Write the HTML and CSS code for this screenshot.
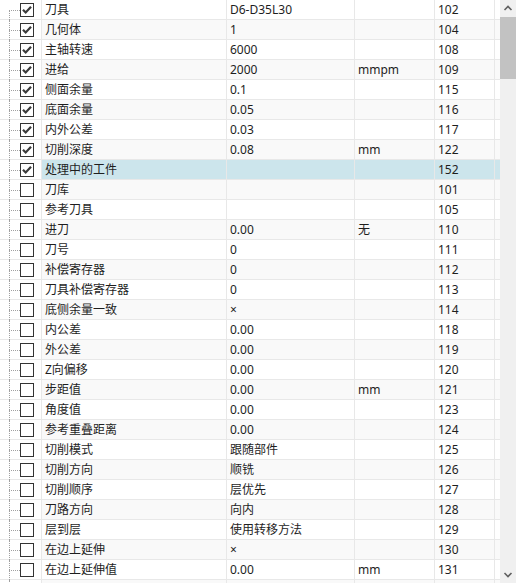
FILE: index.html
```html
<!DOCTYPE html>
<html lang="zh-CN">
<head>
    <meta charset="UTF-8">
    <title>参数列表</title>
    <link rel="stylesheet" href="styles.css">
</head>
<body>

<div class="panel">
    <div class="grid">
        <div class="row first">
            <div class="node"><span class="branch"></span><span class="box"><svg viewBox="0 0 11 11"><polyline points="1.8,5.2 4.3,7.8 9.2,2.6"/></svg></span></div>
            <div class="cell">刀具</div><div class="cell">D6-D35L30</div><div class="cell"></div><div class="cell">102</div><div class="cell"></div>
        </div>
        <div class="row">
            <div class="node"><span class="branch"></span><span class="box"><svg viewBox="0 0 11 11"><polyline points="1.8,5.2 4.3,7.8 9.2,2.6"/></svg></span></div>
            <div class="cell">几何体</div><div class="cell">1</div><div class="cell"></div><div class="cell">104</div><div class="cell"></div>
        </div>
        <div class="row">
            <div class="node"><span class="branch"></span><span class="box"><svg viewBox="0 0 11 11"><polyline points="1.8,5.2 4.3,7.8 9.2,2.6"/></svg></span></div>
            <div class="cell">主轴转速</div><div class="cell">6000</div><div class="cell"></div><div class="cell">108</div><div class="cell"></div>
        </div>
        <div class="row">
            <div class="node"><span class="branch"></span><span class="box"><svg viewBox="0 0 11 11"><polyline points="1.8,5.2 4.3,7.8 9.2,2.6"/></svg></span></div>
            <div class="cell">进给</div><div class="cell">2000</div><div class="cell">mmpm</div><div class="cell">109</div><div class="cell"></div>
        </div>
        <div class="row">
            <div class="node"><span class="branch"></span><span class="box"><svg viewBox="0 0 11 11"><polyline points="1.8,5.2 4.3,7.8 9.2,2.6"/></svg></span></div>
            <div class="cell">侧面余量</div><div class="cell">0.1</div><div class="cell"></div><div class="cell">115</div><div class="cell"></div>
        </div>
        <div class="row">
            <div class="node"><span class="branch"></span><span class="box"><svg viewBox="0 0 11 11"><polyline points="1.8,5.2 4.3,7.8 9.2,2.6"/></svg></span></div>
            <div class="cell">底面余量</div><div class="cell">0.05</div><div class="cell"></div><div class="cell">116</div><div class="cell"></div>
        </div>
        <div class="row">
            <div class="node"><span class="branch"></span><span class="box"><svg viewBox="0 0 11 11"><polyline points="1.8,5.2 4.3,7.8 9.2,2.6"/></svg></span></div>
            <div class="cell">内外公差</div><div class="cell">0.03</div><div class="cell"></div><div class="cell">117</div><div class="cell"></div>
        </div>
        <div class="row">
            <div class="node"><span class="branch"></span><span class="box"><svg viewBox="0 0 11 11"><polyline points="1.8,5.2 4.3,7.8 9.2,2.6"/></svg></span></div>
            <div class="cell">切削深度</div><div class="cell">0.08</div><div class="cell">mm</div><div class="cell">122</div><div class="cell"></div>
        </div>
        <div class="row selected">
            <div class="node"><span class="branch"></span><span class="box"><svg viewBox="0 0 11 11"><polyline points="1.8,5.2 4.3,7.8 9.2,2.6"/></svg></span></div>
            <div class="cell">处理中的工件</div><div class="cell"></div><div class="cell"></div><div class="cell">152</div><div class="cell"></div>
        </div>
        <div class="row">
            <div class="node"><span class="branch"></span><span class="box"></span></div>
            <div class="cell">刀库</div><div class="cell"></div><div class="cell"></div><div class="cell">101</div><div class="cell"></div>
        </div>
        <div class="row">
            <div class="node"><span class="branch"></span><span class="box"></span></div>
            <div class="cell">参考刀具</div><div class="cell"></div><div class="cell"></div><div class="cell">105</div><div class="cell"></div>
        </div>
        <div class="row">
            <div class="node"><span class="branch"></span><span class="box"></span></div>
            <div class="cell">进刀</div><div class="cell">0.00</div><div class="cell">无</div><div class="cell">110</div><div class="cell"></div>
        </div>
        <div class="row">
            <div class="node"><span class="branch"></span><span class="box"></span></div>
            <div class="cell">刀号</div><div class="cell">0</div><div class="cell"></div><div class="cell">111</div><div class="cell"></div>
        </div>
        <div class="row">
            <div class="node"><span class="branch"></span><span class="box"></span></div>
            <div class="cell">补偿寄存器</div><div class="cell">0</div><div class="cell"></div><div class="cell">112</div><div class="cell"></div>
        </div>
        <div class="row">
            <div class="node"><span class="branch"></span><span class="box"></span></div>
            <div class="cell">刀具补偿寄存器</div><div class="cell">0</div><div class="cell"></div><div class="cell">113</div><div class="cell"></div>
        </div>
        <div class="row">
            <div class="node"><span class="branch"></span><span class="box"></span></div>
            <div class="cell">底侧余量一致</div><div class="cell">×</div><div class="cell"></div><div class="cell">114</div><div class="cell"></div>
        </div>
        <div class="row">
            <div class="node"><span class="branch"></span><span class="box"></span></div>
            <div class="cell">内公差</div><div class="cell">0.00</div><div class="cell"></div><div class="cell">118</div><div class="cell"></div>
        </div>
        <div class="row">
            <div class="node"><span class="branch"></span><span class="box"></span></div>
            <div class="cell">外公差</div><div class="cell">0.00</div><div class="cell"></div><div class="cell">119</div><div class="cell"></div>
        </div>
        <div class="row">
            <div class="node"><span class="branch"></span><span class="box"></span></div>
            <div class="cell">Z向偏移</div><div class="cell">0.00</div><div class="cell"></div><div class="cell">120</div><div class="cell"></div>
        </div>
        <div class="row">
            <div class="node"><span class="branch"></span><span class="box"></span></div>
            <div class="cell">步距值</div><div class="cell">0.00</div><div class="cell">mm</div><div class="cell">121</div><div class="cell"></div>
        </div>
        <div class="row">
            <div class="node"><span class="branch"></span><span class="box"></span></div>
            <div class="cell">角度值</div><div class="cell">0.00</div><div class="cell"></div><div class="cell">123</div><div class="cell"></div>
        </div>
        <div class="row">
            <div class="node"><span class="branch"></span><span class="box"></span></div>
            <div class="cell">参考重叠距离</div><div class="cell">0.00</div><div class="cell"></div><div class="cell">124</div><div class="cell"></div>
        </div>
        <div class="row">
            <div class="node"><span class="branch"></span><span class="box"></span></div>
            <div class="cell">切削模式</div><div class="cell">跟随部件</div><div class="cell"></div><div class="cell">125</div><div class="cell"></div>
        </div>
        <div class="row">
            <div class="node"><span class="branch"></span><span class="box"></span></div>
            <div class="cell">切削方向</div><div class="cell">顺铣</div><div class="cell"></div><div class="cell">126</div><div class="cell"></div>
        </div>
        <div class="row">
            <div class="node"><span class="branch"></span><span class="box"></span></div>
            <div class="cell">切削顺序</div><div class="cell">层优先</div><div class="cell"></div><div class="cell">127</div><div class="cell"></div>
        </div>
        <div class="row">
            <div class="node"><span class="branch"></span><span class="box"></span></div>
            <div class="cell">刀路方向</div><div class="cell">向内</div><div class="cell"></div><div class="cell">128</div><div class="cell"></div>
        </div>
        <div class="row">
            <div class="node"><span class="branch"></span><span class="box"></span></div>
            <div class="cell">层到层</div><div class="cell">使用转移方法</div><div class="cell"></div><div class="cell">129</div><div class="cell"></div>
        </div>
        <div class="row">
            <div class="node"><span class="branch"></span><span class="box"></span></div>
            <div class="cell">在边上延伸</div><div class="cell">×</div><div class="cell"></div><div class="cell">130</div><div class="cell"></div>
        </div>
        <div class="row">
            <div class="node"><span class="branch"></span><span class="box"></span></div>
            <div class="cell">在边上延伸值</div><div class="cell">0.00</div><div class="cell">mm</div><div class="cell">131</div><div class="cell"></div>
        </div>
        <div class="row">
            <div class="node"><span class="branch"></span></div>
            <div class="cell"></div><div class="cell"></div><div class="cell"></div><div class="cell"></div><div class="cell"></div>
        </div>
    </div>

    <div class="scrollbar">
        <div class="arrow"><svg viewBox="0 0 16 17"><polyline points="4.5,10 8,6.5 11.5,10"/></svg></div>
        <div class="thumb"></div>
        <div class="track"></div>
        <div class="arrow"><svg viewBox="0 0 16 17"><polyline points="4.5,7 8,10.5 11.5,7"/></svg></div>
    </div>
</div>

</body>
</html>
```

FILE: styles.css
```css
body {
    margin: 0;
    background-color: #ffffff;
    font-family: "Noto Sans", "Noto Sans CJK SC", sans-serif;
    font-size: 12px;
    color: #1e1e1e;
}
.panel {
    display: flex;
    width: 516px;
    height: 583px;
    overflow: hidden;
}
.grid {
    width: 500px;
    flex-shrink: 0;
}
.row {
    display: grid;
    grid-template-columns: 42px 185px 128px 80px 60px 5px;
    height: 20px;
    box-sizing: border-box;
    border-bottom: 1px solid #e8e8e8;
}
.row:nth-child(even) .cell {
    background-color: #f9f9f9;
}
.row.selected .cell {
    background-color: #cce5ec;
}
.cell {
    border-right: 1px solid #e8e8e8;
    padding-left: 3px;
    line-height: 19px;
    white-space: nowrap;
    overflow: hidden;
}
.cell:last-child {
    border-right: none;
}

/* tree column: dotted connector + checkbox */
.node {
    display: flex;
    align-items: center;
    border-right: 1px solid #e8e8e8;
}
.branch {
    align-self: stretch;
    width: 10px;
    margin-left: 9px;
    margin-bottom: -1px;
    border-left: 1px dotted #a0a0a0;
    background-image: linear-gradient(to right, #a0a0a0 50%, transparent 50%);
    background-size: 2px 1px;
    background-repeat: repeat-x;
    background-position: 1px 10px;
}
.first .branch {
    margin-top: 10px;
    background-position: 1px 0;
}
.box {
    width: 14px;
    height: 14px;
    box-sizing: border-box;
    border: 1px solid #333333;
    background-color: #ffffff;
}
.box svg {
    display: block;
    width: 12px;
    height: 12px;
}
.box polyline {
    fill: none;
    stroke: #3a3a3a;
    stroke-width: 2;
}

.scrollbar {
    width: 16px;
    display: flex;
    flex-direction: column;
    background-color: #f0f0f0;
}
.arrow {
    height: 17px;
}
.arrow svg {
    display: block;
    width: 16px;
    height: 17px;
}
.arrow polyline {
    fill: none;
    stroke: #606060;
    stroke-width: 1.6;
}
.thumb {
    height: 62px;
    background-color: #c2c2c2;
}
.track {
    flex: 1;
}
```
